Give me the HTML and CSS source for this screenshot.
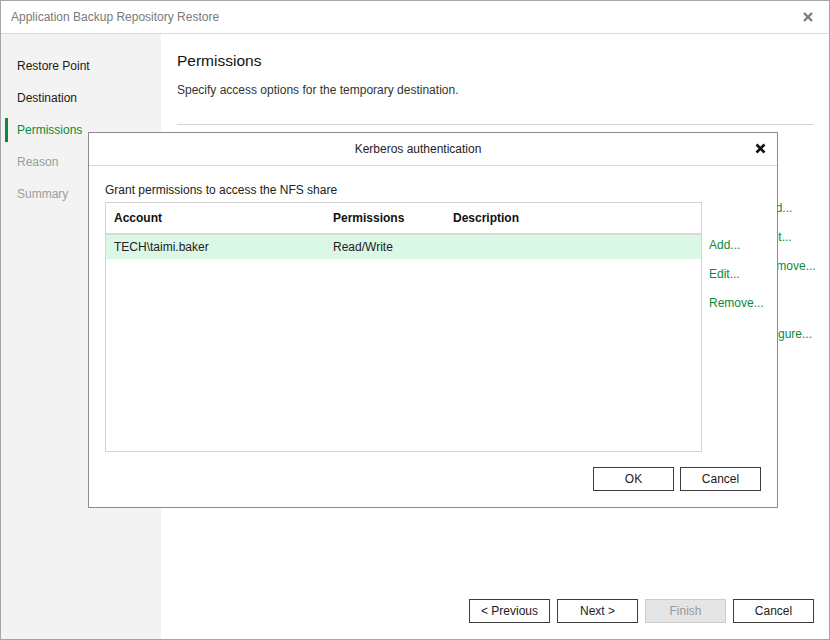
FILE: index.html
```html
<!DOCTYPE html>
<html>
<head>
    <title>Application Backup Repository Restore</title>
    <meta charset="UTF-8">
    <link rel="stylesheet" href="styles.css">
</head>
<body>

    <div class="window">
        <div class="titlebar">
            <span class="title">Application Backup Repository Restore</span>
            <svg class="close" width="10" height="10" viewBox="0 0 10 10">
                <path d="M1 1 L9 9 M9 1 L1 9" stroke="#7b7b7b" stroke-width="2.4"/>
            </svg>
        </div>

        <div class="main">
            <div class="nav">
                <div class="nav-item">Restore Point</div>
                <div class="nav-item">Destination</div>
                <div class="nav-item active">Permissions</div>
                <div class="nav-item disabled">Reason</div>
                <div class="nav-item disabled">Summary</div>
            </div>

            <div class="content">
                <h1>Permissions</h1>
                <p class="subtitle">Specify access options for the temporary destination.</p>
                <div class="separator"></div>

                <div class="side-links">
                    <a class="link">Add...</a>
                    <a class="link">Edit...</a>
                    <a class="link">Remove...</a>
                    <a class="link configure">Configure...</a>
                </div>

                <div class="footer">
                    <button>&lt; Previous</button>
                    <button>Next &gt;</button>
                    <button class="disabled-btn">Finish</button>
                    <button>Cancel</button>
                </div>
            </div>
        </div>

        <!-- modal on top of the wizard -->
        <div class="dialog">
            <div class="dialog-title">
                <span>Kerberos authentication</span>
                <svg class="dialog-close" width="11" height="11" viewBox="0 0 11 11">
                    <path d="M1.5 1.5 L9.5 9.5 M9.5 1.5 L1.5 9.5" stroke="#111" stroke-width="2.6"/>
                </svg>
            </div>
            <div class="dialog-body">
                <p class="grant">Grant permissions to access the NFS share</p>
                <div class="dialog-row">
                    <div class="table">
                        <div class="table-head">
                            <span>Account</span>
                            <span>Permissions</span>
                            <span>Description</span>
                        </div>
                        <div class="table-row selected">
                            <span>TECH\taimi.baker</span>
                            <span>Read/Write</span>
                            <span></span>
                        </div>
                    </div>
                    <div class="dialog-links">
                        <a class="link">Add...</a>
                        <a class="link">Edit...</a>
                        <a class="link">Remove...</a>
                    </div>
                </div>
                <div class="dialog-footer">
                    <button>OK</button>
                    <button>Cancel</button>
                </div>
            </div>
        </div>
    </div>

</body>
</html>
```

FILE: styles.css
```css
body {
    margin: 0;
    font-family: "Liberation Sans", Arial, sans-serif;
    font-size: 12px;
    color: #1a1a1a;
    background: white;
}
.window {
    position: relative;
    width: 830px;
    height: 640px;
    border: 1px solid #a6a6a6;
    box-sizing: border-box;
    display: flex;
    flex-direction: column;
}
.titlebar {
    height: 32px;
    border-bottom: 1px solid #dadada;
    display: flex;
    align-items: center;
    justify-content: space-between;
    padding: 0 16px 0 10px;
}
.title {
    color: #7a7a7a;
}
.main {
    flex: 1;
    display: flex;
}
.nav {
    width: 160px;
    background-color: #f2f3f2;
    padding-top: 16px;
}
.nav-item {
    height: 32px;
    line-height: 32px;
    padding-left: 16px;
    position: relative;
}
.nav-item.active {
    color: #0b8a3b;
}
.nav-item.active::before {
    content: "";
    position: absolute;
    left: 4px;
    top: 4px;
    width: 3px;
    height: 24px;
    background: #0b8a3b;
}
.nav-item.disabled {
    color: #9c9c9c;
}
.content {
    flex: 1;
    display: flex;
    flex-direction: column;
    padding: 17px 15px 16px 16px;
}
h1 {
    font-size: 15.5px;
    font-weight: normal;
    margin: 0;
    line-height: 20px;
    color: #111;
}
.subtitle {
    margin: 11px 0 0 0;
    line-height: 16px;
    color: #333;
}
.separator {
    border-top: 1px solid #d4d4d4;
    margin-top: 26px;
}
.side-links {
    display: flex;
    flex-direction: column;
    align-self: flex-end;
    width: 53px;
    margin-top: 75px;
}
.link {
    color: #0b8a3b;
    line-height: 16px;
    margin-bottom: 13px;
    white-space: nowrap;
}
.side-links .configure {
    margin-top: 39px;
    margin-left: -11px;
}
.footer {
    margin-top: auto;
    display: flex;
    justify-content: flex-end;
    gap: 7px;
}
button {
    width: 81px;
    height: 24px;
    background: white;
    border: 1px solid #3c3c3c;
    font-family: "Liberation Sans", Arial, sans-serif;
    font-size: 12px;
    color: #1a1a1a;
    padding: 0;
}
.disabled-btn {
    background: #e5e5e5;
    border-color: #cccccc;
    color: #9a9a9a;
}
.dialog {
    position: absolute;
    left: 87px;
    top: 131px;
    width: 690px;
    height: 376px;
    border: 1px solid #8a8a8a;
    box-sizing: border-box;
    background: white;
    display: flex;
    flex-direction: column;
}
.dialog-title {
    height: 32px;
    border-bottom: 1px solid #d6d6d6;
    display: flex;
    align-items: center;
    justify-content: center;
    padding-right: 30px;
    position: relative;
    color: #222;
}
.dialog-close {
    position: absolute;
    right: 11px;
    top: 10px;
}
.dialog-body {
    flex: 1;
    display: flex;
    flex-direction: column;
    padding: 16px 16px 16px 16px;
}
.grant {
    margin: 0 0 4px 0;
    line-height: 16px;
    color: #222;
}
.dialog-row {
    display: flex;
    gap: 7px;
}
.table {
    flex-shrink: 0;
    width: 597px;
    height: 250px;
    border: 1px solid #d4d4d4;
    box-sizing: border-box;
}
.table-head, .table-row {
    display: grid;
    grid-template-columns: 219px 120px 1fr;
    padding-left: 8px;
    align-items: center;
}
.table-head {
    height: 30px;
    border-bottom: 2px solid #d8d8d8;
    font-weight: bold;
    color: #111;
}
.table-row {
    height: 24px;
    color: #222;
}
.table-row.selected {
    background-color: #dbf7e5;
}
.dialog-links {
    display: flex;
    flex-direction: column;
    padding-top: 35px;
}
.dialog-footer {
    margin-top: auto;
    display: flex;
    justify-content: flex-end;
    gap: 6px;
}
```
